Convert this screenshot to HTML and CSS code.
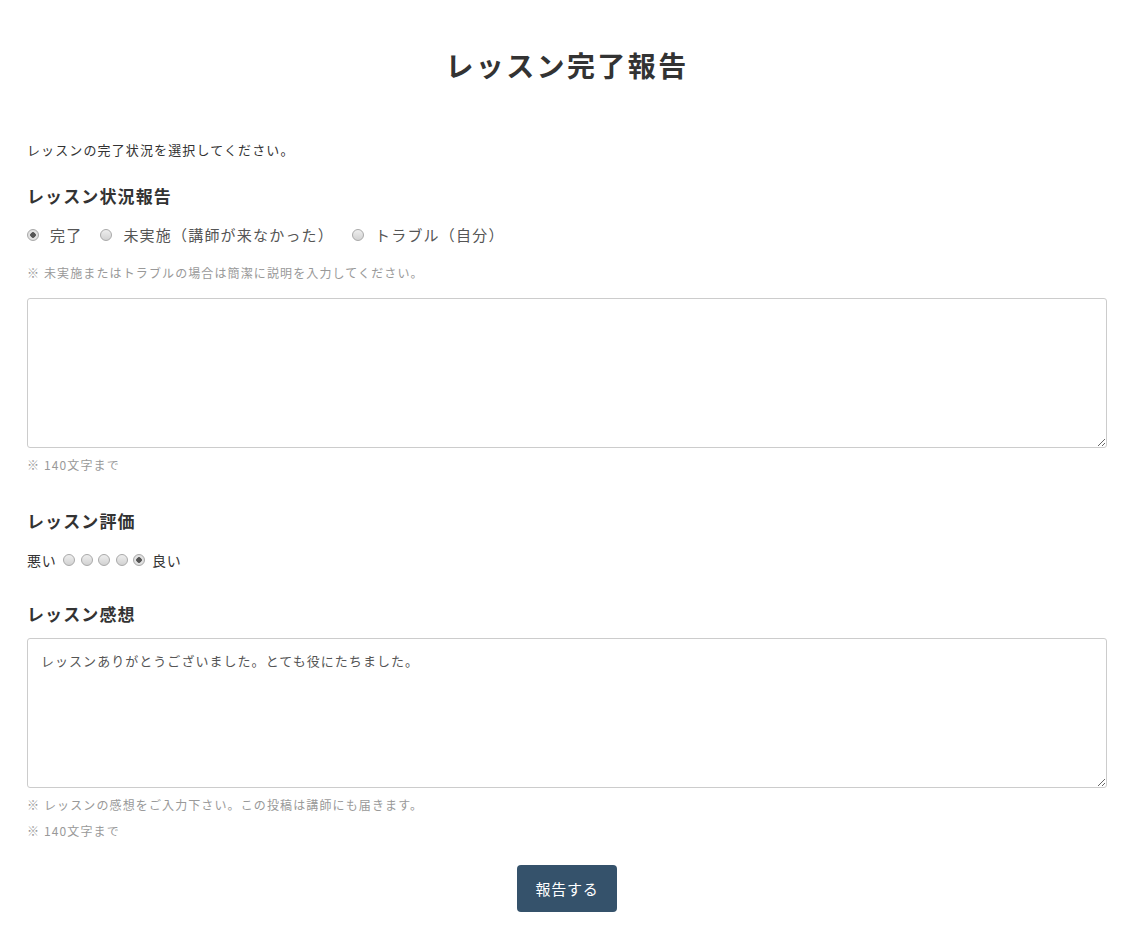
FILE: index.html
```html
<!DOCTYPE html>
<html lang="ja">
<head>
    <meta charset="UTF-8">
    <title>レッスン完了報告</title>
    <link rel="stylesheet" href="styles.css">
</head>
<body>

<div class="container">
    <h1>レッスン完了報告</h1>

    <p class="intro">レッスンの完了状況を選択してください。</p>

    <h2>レッスン状況報告</h2>
    <div class="status-options">
        <label class="option"><input type="radio" name="status" checked><span>完了</span></label>
        <label class="option"><input type="radio" name="status"><span>未実施（講師が来なかった）</span></label>
        <label class="option"><input type="radio" name="status"><span>トラブル（自分）</span></label>
    </div>
    <p class="note note-top">※ 未実施またはトラブルの場合は簡潔に説明を入力してください。</p>
    <textarea class="field"></textarea>
    <p class="note">※ 140文字まで</p>

    <h2 class="section">レッスン評価</h2>
    <div class="rating">
        <span>悪い</span>
        <input type="radio" name="rating">
        <input type="radio" name="rating">
        <input type="radio" name="rating">
        <input type="radio" name="rating">
        <input type="radio" name="rating" checked>
        <span>良い</span>
    </div>

    <h2 class="section section-comment">レッスン感想</h2>
    <textarea class="field">レッスンありがとうございました。とても役にたちました。</textarea>
    <p class="note">※ レッスンの感想をご入力下さい。この投稿は講師にも届きます。</p>
    <p class="note">※ 140文字まで</p>

    <div class="actions">
        <button type="button">報告する</button>
    </div>
</div>

</body>
</html>
```

FILE: styles.css
```css
body {
    margin: 0;
    font-family: "Noto Sans CJK JP", "Noto Sans", sans-serif;
    color: #333333;
    background-color: #ffffff;
    letter-spacing: 0.07em;
}
.container {
    padding: 0 29px 40px 27px;
}
h1 {
    margin: 45px 0 0;
    font-size: 28px;
    line-height: 40px;
    font-weight: bold;
    letter-spacing: 0.085em;
    text-align: center;
    color: #333333;
}
.intro {
    margin: 55px 0 0;
    font-size: 13px;
    line-height: 20px;
}
h2 {
    margin: 24px 0 0;
    font-size: 17px;
    line-height: 24px;
    font-weight: bold;
    color: #333333;
}
h2.section {
    margin-top: 35px;
}
h2.section-comment {
    margin-top: 32px;
}
input[type="radio"] {
    -webkit-appearance: none;
    appearance: none;
    width: 12px;
    height: 12px;
    margin: 0;
    border: 1px solid #a9a9a9;
    border-radius: 50%;
    background: linear-gradient(#eeeeee, #d2d2d2);
    box-sizing: border-box;
    vertical-align: middle;
    flex-shrink: 0;
}
input[type="radio"]:checked {
    background: radial-gradient(circle, #555555 0, #555555 2.5px, #e4e4e4 3px, #d8d8d8 100%);
}
.status-options {
    display: flex;
    margin-top: 17px;
    font-size: 15px;
    line-height: 20px;
    letter-spacing: 0.08em;
    color: #555555;
}
.option {
    display: flex;
    align-items: center;
    gap: 11px;
    margin-right: 18px;
}
.note {
    margin: 8px 0 0;
    font-size: 12px;
    line-height: 18px;
    color: #999999;
}
.note-top {
    margin-top: 19px;
}
.field {
    display: block;
    width: 100%;
    height: 150px;
    margin-top: 16px;
    padding: 12px 13px;
    border: 1px solid #cccccc;
    border-radius: 3px;
    box-sizing: border-box;
    font-family: inherit;
    font-size: 13px;
    line-height: 20px;
    letter-spacing: 0.08em;
    color: #555555;
    resize: vertical;
}
h2 + .field {
    margin-top: 12px;
}
.rating {
    display: flex;
    align-items: center;
    gap: 5.6px;
    margin-top: 17px;
    font-size: 14px;
    line-height: 20px;
    letter-spacing: 0.05em;
}
.rating span:first-child {
    margin-right: 1px;
}
.rating span:last-child {
    margin-left: 1px;
}
.actions {
    display: flex;
    justify-content: center;
    margin-top: 25px;
}
button {
    width: 100px;
    height: 47px;
    border: none;
    border-radius: 4px;
    background-color: #35526b;
    color: #ffffff;
    font-family: inherit;
    font-size: 15px;
    letter-spacing: 0.05em;
    cursor: pointer;
}
button:hover {
    background-color: #2c465c;
}
```
